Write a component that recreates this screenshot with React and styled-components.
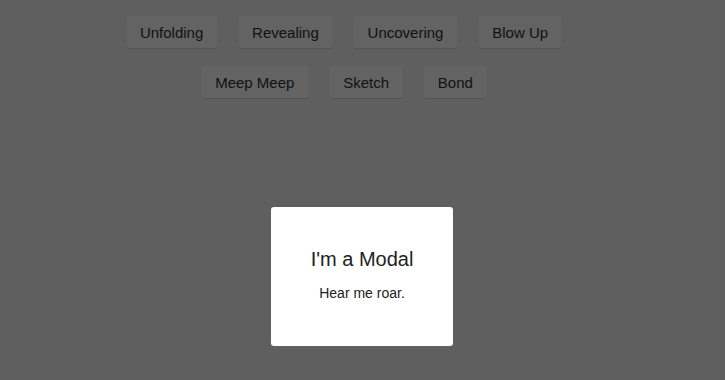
import styled, { createGlobalStyle } from "styled-components";

const GlobalStyle = createGlobalStyle`
  html, body {
    margin: 0;
    padding: 0;
    height: 100%;
    background: #5f5f5f;
  }
  body {
    font-family: "Liberation Sans", Arial, sans-serif;
  }
`;

const rows = [
  ["Unfolding", "Revealing", "Uncovering", "Blow Up"],
  ["Meep Meep", "Sketch", "Bond"],
];

const App = () => {
  return (
    <Page>
      <GlobalStyle />
      <Buttons>
        {rows.map((row, i) => (
          <Row key={i}>
            {row.map((label) => (
              <Button key={label}>{label}</Button>
            ))}
          </Row>
        ))}
      </Buttons>
      <Modal>
        <Title>I'm a Modal</Title>
        <Text>Hear me roar.</Text>
      </Modal>
    </Page>
  );
};

export default App;

const Page = styled.div`
  position: relative;
  width: 725px;
  height: 380px;
  overflow: hidden;
  background: #5f5f5f;
`;

const Buttons = styled.div`
  width: 688px;
  padding-top: 16px;
  display: flex;
  flex-direction: column;
  gap: 18px;
`;

const Row = styled.div`
  display: flex;
  justify-content: center;
  gap: 20px;
`;

const Button = styled.button`
  height: 32px;
  padding: 0 14.4px;
  border: none;
  border-radius: 3px;
  background: #636363;
  box-shadow: 0 1px 1px rgba(0, 0, 0, 0.12);
  color: #111;
  font-family: "Liberation Sans", Arial, sans-serif;
  font-size: 15px;
  cursor: pointer;
`;

const Modal = styled.div`
  position: absolute;
  top: 207px;
  left: 271px;
  width: 182px;
  height: 139px;
  box-sizing: border-box;
  padding-top: 40px;
  background: #fff;
  border-radius: 3px;
  display: flex;
  flex-direction: column;
  align-items: center;
  text-align: center;
`;

const Title = styled.div`
  font-size: 20px;
  line-height: 24px;
  color: #222;
`;

const Text = styled.div`
  margin-top: 13px;
  font-size: 14px;
  line-height: 18px;
  color: #222;
`;
